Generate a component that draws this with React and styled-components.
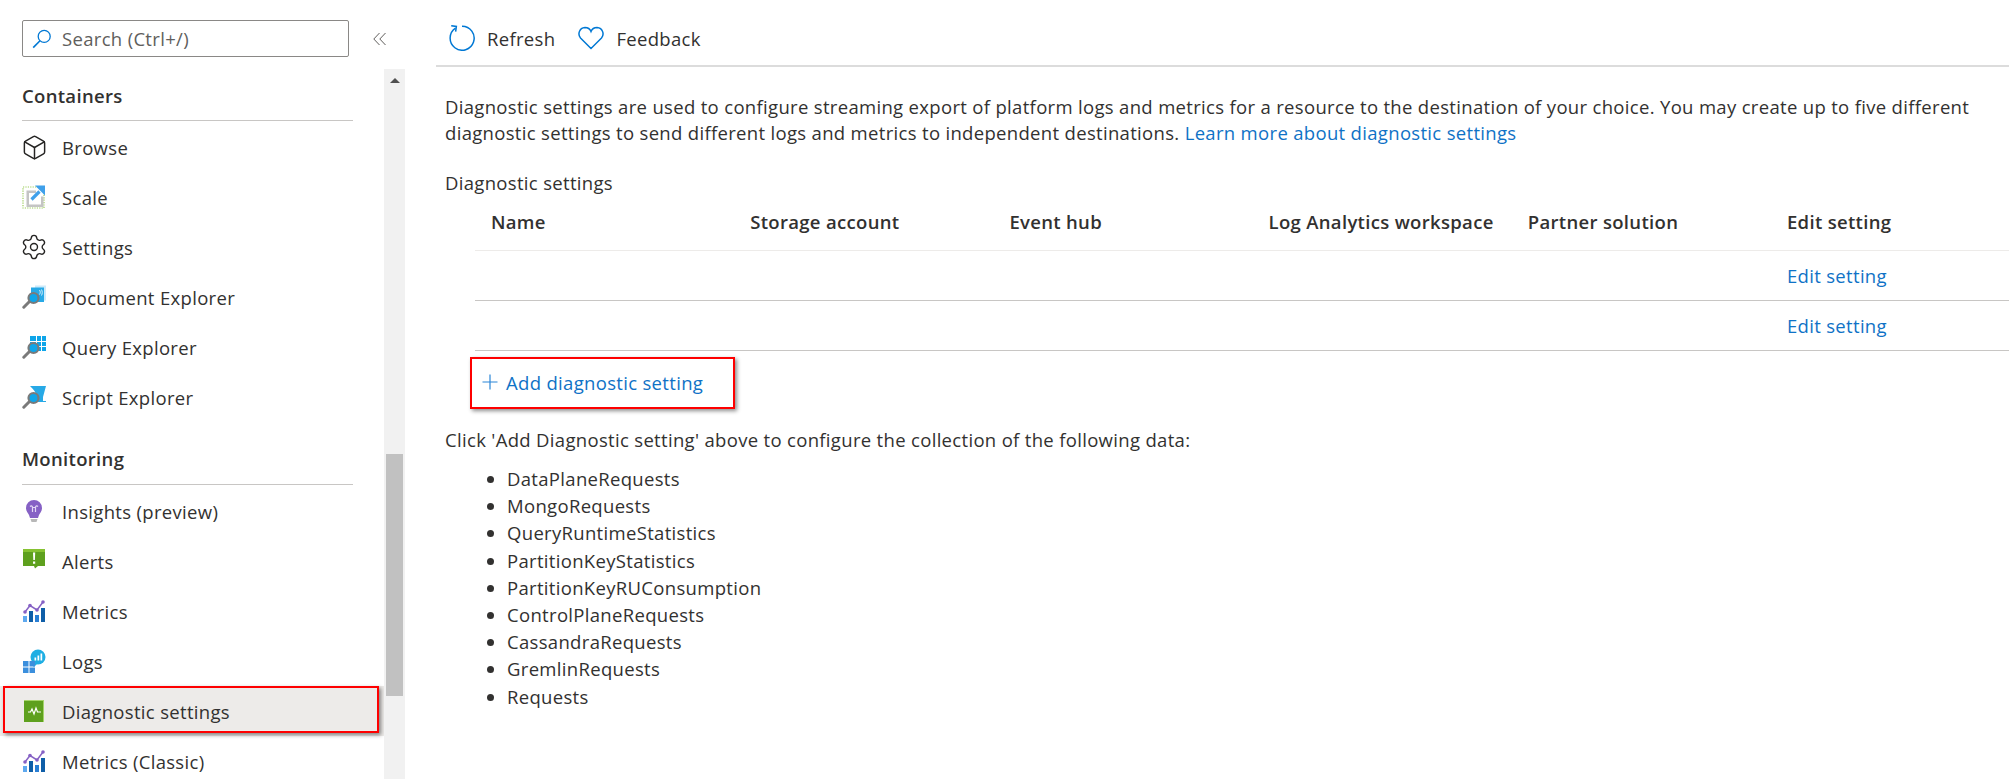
import React from "react";
import styled, { createGlobalStyle } from "styled-components";
import { Box, Settings } from "lucide-react";

const GlobalStyle = createGlobalStyle`
  html, body { margin: 0; padding: 0; background: #fff; }
  body { font-family: "Open Sans", "Noto Sans", sans-serif; color: #323130; font-size: 18.5px; letter-spacing: 0.32px; overflow: hidden; }
`;

const Page = styled.div`
  display: flex;
  width: 2009px;
  height: 779px;
  overflow: hidden;
`;

const Sidebar = styled.aside`
  width: 436px;
  flex: none;
  display: flex;
  flex-direction: column;
`;

const SearchRow = styled.div`
  display: flex;
  align-items: center;
  height: 37px;
  margin: 20px 0 12px 22px;
`;

const SearchBox = styled.div`
  width: 327px;
  height: 37px;
  box-sizing: border-box;
  border: 1px solid #8a8886;
  border-radius: 2px;
  display: flex;
  align-items: center;
  gap: 10px;
  padding-left: 9px;
  color: #605e5c;
`;

const Collapse = styled.div`
  margin-left: 24px;
  display: flex;
`;

const SideBody = styled.div`
  flex: 1;
  display: flex;
  width: 405px;
  min-height: 0;
`;

const Nav = styled.nav`
  width: 384px;
  flex: none;
  overflow: hidden;
`;

const Heading = styled.h3`
  margin: 0 31px 1px 22px;
  height: ${p => p.$height}px;
  box-sizing: border-box;
  border-bottom: 1px solid #c8c6c4;
  font-size: 18.5px;
  font-weight: 600;
  line-height: 24px;
  padding-top: ${p => p.$top}px;
  color: #323130;
`;

const Item = styled.div`
  position: relative;
  height: 50px;
  display: flex;
  align-items: center;
  padding-left: 22px;
  background: ${p => (p.$active ? "#edebe9" : "transparent")};

  ${p => p.$active && `
    &::after {
      content: "";
      position: absolute;
      left: 3px;
      top: 0;
      width: 376px;
      height: 47px;
      box-sizing: border-box;
      border: 2px solid #fe0000;
      box-shadow: 2px 2px 4px rgba(0, 0, 0, 0.45);
    }
  `}
`;

const IconSlot = styled.span`
  width: 24px;
  height: 24px;
  flex: none;
  display: flex;
  align-items: center;
  justify-content: center;
  margin-right: 16px;

  svg { flex: none; }
`;

const Scrollbar = styled.div`
  width: 21px;
  flex: none;
  background: #f1f1f1;
  display: flex;
  flex-direction: column;
  align-items: center;
`;

const ScrollArrow = styled.span`
  margin-top: 9px;
  width: 0;
  height: 0;
  border-left: 5px solid transparent;
  border-right: 5px solid transparent;
  border-bottom: 5px solid #505050;
`;

const ScrollThumb = styled.div`
  width: 17px;
  height: 242px;
  margin-top: 371px;
  background: #c1c1c1;
`;

const Main = styled.main`
  flex: 1;
  min-width: 0;
`;

const Toolbar = styled.div`
  height: 67px;
  box-sizing: border-box;
  border-bottom: 2px solid #dcdcdc;
  display: flex;
  align-items: center;
  padding: 11px 0 0 13px;
`;

const ToolButton = styled.div`
  display: flex;
  align-items: center;
  gap: 12px;
  margin-right: 23px;
`;

const Description = styled.p`
  margin: 27px 20px 0 9px;
  line-height: 26px;
`;

const Link = styled.a`
  color: #0f72c6;
  text-decoration: none;
`;

const Caption = styled.div`
  margin: 24px 0 0 9px;
  line-height: 26px;
`;

const Table = styled.div`
  margin-left: 39px;
  overflow: hidden;
`;

const Row = styled.div`
  display: grid;
  grid-template-columns: repeat(6, 259.2px);
  height: ${p => (p.$header ? 55 : 50)}px;
  box-sizing: border-box;
  border-bottom: 1px solid ${p => (p.$header ? "#edebe9" : "#c8c6c4")};
  align-items: center;
`;

const HeadCell = styled.div`
  padding: 0 0 3px 16px;
  font-weight: 600;
  white-space: nowrap;
`;

const Cell = styled.div`
  padding-left: 16px;
`;

const AddButton = styled.div`
  position: relative;
  width: 265px;
  height: 52px;
  margin: 6px 0 0 34px;
  box-sizing: border-box;
  display: flex;
  align-items: center;
  gap: 8px;
  padding: 0 0 2px 12px;
  color: #0f72c6;

  &::after {
    content: "";
    position: absolute;
    inset: 0;
    border: 2px solid #fe0000;
    box-shadow: 2px 2px 4px rgba(0, 0, 0, 0.45);
  }
`;

const Note = styled.div`
  margin: 18px 0 0 9px;
  line-height: 26px;
`;

const DataList = styled.ul`
  margin: 12px 0 0 9px;
  padding-left: 62px;
  line-height: 27.2px;
`;

const SearchIcon = () => (
  <svg width="20" height="20" viewBox="0 0 20 20" fill="none" stroke="#0078d4" strokeWidth="1.3">
    <circle cx="12.2" cy="7.4" r="6" />
    <path d="M8 11.8 1.2 18.6" strokeWidth="1.6" />
  </svg>
);

const ChevronsIcon = () => (
  <svg width="14" height="14" viewBox="0 0 14 14" fill="none" stroke="#605e5c" strokeWidth="1">
    <path d="M6.5 1 .8 7l5.7 6M12.5 1 6.8 7l5.7 6" />
  </svg>
);

const PlusIcon = () => (
  <svg width="16" height="16" viewBox="0 0 16 16" fill="none" stroke="#2b86d8" strokeWidth="1.2">
    <path d="M8 .5v15M.5 8h15" />
  </svg>
);

const ScaleIcon = () => (
  <svg width="24" height="24" viewBox="0 0 24 24" fill="none">
    <rect x="1" y="2" width="21" height="21" stroke="#9ccc5a" strokeWidth="1.2" strokeDasharray="1.2 1.2" />
    <path d="M4.500 5.500H14v2.500H7v11.500h12v-8h2.500v10.500h-17z" fill="#c4c4c4" />
    <path d="M9.500 14.500 17.500 6.500" stroke="#3fa0ea" strokeWidth="3.200" />
    <path d="M13 0.500H23V10.500z" fill="#3fa0ea" />
  </svg>
);

const Lens = () => (
  <g>
    <path d="M7.500 16.500 1.800 22.200" stroke="#7a7a7a" strokeWidth="3" strokeLinecap="round" />
    <circle cx="11.500" cy="13" r="5" fill="#0ea5e9" stroke="#7a7a7a" strokeWidth="2.200" />
  </g>
);

const DocumentIcon = () => (
  <svg width="24" height="24" viewBox="0 0 24 24" fill="none">
    <rect x="13" y="0.500" width="11" height="15" fill="#cdeafa" />
    <rect x="9" y="2.500" width="13" height="14.500" fill="#27a9e6" />
    <path d="M17.500 5c1 1.500 1 3 0 4.500M19.500 4.500c1 2 1 4 0 6" stroke="#fff" strokeWidth="0.800" />
    <Lens />
  </svg>
);

const QueryIcon = () => (
  <svg width="24" height="24" viewBox="0 0 24 24" fill="none">
    <path d="M8 1h6v5H8zM15 1h4v5h-4zM20 1h4v5h-4zM15 7h4v4h-4zM20 7h4v4h-4zM15 12h4v4h-4zM20 12h4v4h-4zM8 7h6v4H8z" fill="#0ea5e9" />
    <Lens />
  </svg>
);

const ScriptIcon = () => (
  <svg width="24" height="24" viewBox="0 0 24 24" fill="none">
    <path d="M8 1h16l-3 11v4h3v1H9c3-2 5-3 5-6 0-4-2-6-6-10z" fill="#27a9e6" />
    <Lens />
  </svg>
);

const BulbIcon = () => (
  <svg width="24" height="24" viewBox="0 0 24 24" fill="none">
    <path d="M12 1a8 8 0 0 0-8 8c0 3.200 2 5 3 7l1 3h8l1-3c1-2 3-3.800 3-7a8 8 0 0 0-8-8z" fill="#8661c5" />
    <path d="M8 7.500c1-1 2-1 2.500.5v5M16 7.500c-1-1-2-1-2.500.5v5M10 8.500h4" stroke="#e3d7f5" strokeWidth="1.200" />
    <path d="M8.500 20h7l-1 3h-5z" fill="#b8b8b8" />
  </svg>
);

const AlertIcon = () => (
  <svg width="24" height="24" viewBox="0 0 24 24" fill="none">
    <path d="M1 0h22v17H16l-3 2.500-1-2.500H1z" fill="#5ea01e" />
    <path d="M1 0h22v3H1z" fill="#86c232" />
    <path d="M11 3.500h2.200l-.3 7.500h-1.600zM11 12.500h2.200v2.200H11z" fill="#fff" />
  </svg>
);

const MetricsIcon = () => (
  <svg width="24" height="24" viewBox="0 0 24 24" fill="none">
    <path d="M3 13 8 6.500l7 4.500 6-8" stroke="#8661c5" strokeWidth="1.500" />
    <circle cx="3" cy="13" r="1.800" fill="#8661c5" />
    <circle cx="8" cy="6.500" r="1.800" fill="#8661c5" />
    <circle cx="15" cy="11" r="1.800" fill="#8661c5" />
    <circle cx="21" cy="3" r="1.800" fill="#8661c5" />
    <path d="M1 17h4v6H1z" fill="#5ea9ef" />
    <path d="M7 12h4v11H7z" fill="#0f5fa8" />
    <path d="M13 16h4v7h-4z" fill="#2a7fd4" />
    <path d="M19 9h4v14h-4z" fill="#0f5fa8" />
  </svg>
);

const LogsIcon = () => (
  <svg width="24" height="24" viewBox="0 0 24 24" fill="none">
    <circle cx="16" cy="8" r="7.500" fill="#1faee3" />
    <path d="M9 15h6l-3 3z" fill="#1faee3" />
    <path d="M12.500 8.500h1.700v3h-1.700zM15.500 6.500h1.700v5h-1.700zM18.500 4.500h1.700v7h-1.700z" fill="#fff" />
    <path d="M1 12h5.500v5.500H1zM1 18.500h5.500V24H1zM7.500 18.500H13V24H7.500zM7.500 12H13v5.500H7.500z" fill="#3b8fdd" />
  </svg>
);

const DiagnosticIcon = () => (
  <svg width="24" height="24" viewBox="0 0 24 24" fill="none">
    <rect x="2" y="1" width="20" height="22" fill="#5ea01e" />
    <path d="M2 1h20v1H2zM21 1h1v22h-1z" fill="#a5d46a" />
    <path d="M6 13h2.500l1.500-3 2 5 2-6 1.500 4H19" stroke="#fff" strokeWidth="1.200" />
  </svg>
);

const RefreshIcon = () => (
  <svg width="26" height="26" viewBox="0 0 26 26" fill="none" stroke="#0078d4" strokeWidth="1.500">
    <path d="M6.500 3.200A12 12 0 1 0 13 1.200" />
    <path d="M1.800 1.400h5.200v5.200" transform="rotate(8 7 4)" />
  </svg>
);

const HeartIcon = () => (
  <svg width="26" height="24" viewBox="0 0 26 24" fill="none" stroke="#0078d4" strokeWidth="1.500">
    <path d="M13 22.500 2.500 12C-.500 8.500 1 2 7 1.500c3 0 5 1.500 6 4 1-2.500 3-4 6-4 6 .5 7.500 7 4.500 10.500z" />
  </svg>
);

const sections = [
  {
    title: "Containers",
    height: 52,
    top: 15,
    items: [
      ["Browse", <Box key="b" size={27} strokeWidth={1.3} color="#252423" />],
      ["Scale", <ScaleIcon key="s" />],
      ["Settings", <Settings key="g" size={28} strokeWidth={1.2} color="#252423" />],
      ["Document Explorer", <DocumentIcon key="d" />],
      ["Query Explorer", <QueryIcon key="q" />],
      ["Script Explorer", <ScriptIcon key="x" />],
    ],
  },
  {
    title: "Monitoring",
    height: 63,
    top: 25,
    items: [
      ["Insights (preview)", <BulbIcon key="i" />],
      ["Alerts", <AlertIcon key="a" />],
      ["Metrics", <MetricsIcon key="m" />],
      ["Logs", <LogsIcon key="l" />],
      ["Diagnostic settings", <DiagnosticIcon key="ds" />, true],
      ["Metrics (Classic)", <MetricsIcon key="mc" />],
    ],
  },
];

const columns = ["Name", "Storage account", "Event hub", "Log Analytics workspace", "Partner solution", "Edit setting"];

const dataTypes = [
  "DataPlaneRequests",
  "MongoRequests",
  "QueryRuntimeStatistics",
  "PartitionKeyStatistics",
  "PartitionKeyRUConsumption",
  "ControlPlaneRequests",
  "CassandraRequests",
  "GremlinRequests",
  "Requests",
];

const App = () => (
  <Page>
    <GlobalStyle />
    <Sidebar>
      <SearchRow>
        <SearchBox>
          <SearchIcon />
          Search (Ctrl+/)
        </SearchBox>
        <Collapse><ChevronsIcon /></Collapse>
      </SearchRow>
      <SideBody>
        <Nav>
          {sections.map(section => (
            <div key={section.title}>
              <Heading $height={section.height} $top={section.top}>{section.title}</Heading>
              {section.items.map(([label, icon, active]) => (
                <Item key={label} $active={active}>
                  <IconSlot>{icon}</IconSlot>
                  {label}
                </Item>
              ))}
            </div>
          ))}
        </Nav>
        <Scrollbar>
          <ScrollArrow />
          <ScrollThumb />
        </Scrollbar>
      </SideBody>
    </Sidebar>
    <Main>
      <Toolbar>
        <ToolButton><RefreshIcon />Refresh</ToolButton>
        <ToolButton><HeartIcon />Feedback</ToolButton>
      </Toolbar>
      <Description>
        Diagnostic settings are used to configure streaming export of platform logs and metrics for a resource to the destination of your choice. You may create up to five different
        diagnostic settings to send different logs and metrics to independent destinations. <Link>Learn more about diagnostic settings</Link>
      </Description>
      <Caption>Diagnostic settings</Caption>
      <Table>
        <Row $header>
          {columns.map(c => <HeadCell key={c}>{c}</HeadCell>)}
        </Row>
        {[0, 1].map(i => (
          <Row key={i}>
            <Cell /><Cell /><Cell /><Cell /><Cell />
            <Cell><Link>Edit setting</Link></Cell>
          </Row>
        ))}
      </Table>
      <AddButton>
        <PlusIcon />
        Add diagnostic setting
      </AddButton>
      <Note>Click 'Add Diagnostic setting' above to configure the collection of the following data:</Note>
      <DataList>
        {dataTypes.map(d => <li key={d}>{d}</li>)}
      </DataList>
    </Main>
  </Page>
);

export default App;
